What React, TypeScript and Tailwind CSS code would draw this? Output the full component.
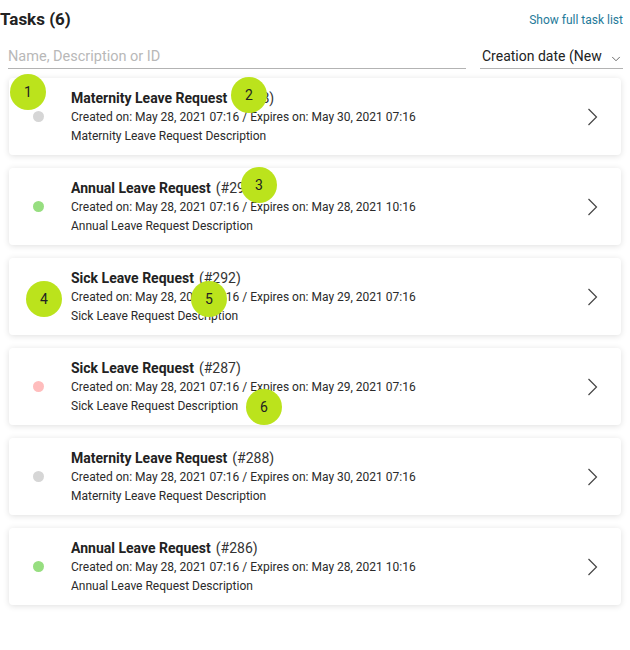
import { ChevronDown } from "lucide-react";

type Task = {
  name: string;
  id: number;
  created: string;
  expires: string;
  status: "grey" | "green" | "red";
};

const tasks: Task[] = [
  { name: "Maternity Leave Request", id: 288, created: "May 28, 2021 07:16", expires: "May 30, 2021 07:16", status: "grey" },
  { name: "Annual Leave Request", id: 290, created: "May 28, 2021 07:16", expires: "May 28, 2021 10:16", status: "green" },
  { name: "Sick Leave Request", id: 292, created: "May 28, 2021 07:16", expires: "May 29, 2021 07:16", status: "grey" },
  { name: "Sick Leave Request", id: 287, created: "May 28, 2021 07:16", expires: "May 29, 2021 07:16", status: "red" },
  { name: "Maternity Leave Request", id: 288, created: "May 28, 2021 07:16", expires: "May 30, 2021 07:16", status: "grey" },
  { name: "Annual Leave Request", id: 286, created: "May 28, 2021 07:16", expires: "May 28, 2021 10:16", status: "green" },
];

const dotColor = {
  grey: "bg-[#d6d6d6]",
  green: "bg-[#97de80]",
  red: "bg-[#ffbdbd]",
};

// callout markers laid over the screenshot
const markers = [
  { n: 1, cls: "left-[10px] top-[74px]" },
  { n: 2, cls: "left-[231px] top-[77px]" },
  { n: 3, cls: "left-[241px] top-[167px]" },
  { n: 4, cls: "left-[26px] top-[281px]" },
  { n: 5, cls: "left-[191px] top-[281px]" },
  { n: 6, cls: "left-[246px] top-[389px]" },
];

function Chevron() {
  return (
    <svg width="11" height="18" viewBox="0 0 11 18" className="mr-[23px]" fill="none">
      <polyline points="1.5,1 9.5,9 1.5,17" stroke="#444" strokeWidth="1.2" />
    </svg>
  );
}

function TaskCard({ task }: { task: Task }) {
  return (
    <div className="flex h-[77px] items-center rounded-[4px] bg-white shadow-[0_1px_6px_rgba(0,0,0,0.13)]">
      <div className="flex w-[62px] justify-center">
        <span className={`ml-[-3px] h-[11px] w-[11px] rounded-full ${dotColor[task.status]}`} />
      </div>
      <div className="flex-1 text-[#222]">
        <div className="text-[14px] leading-[20px]">
          <span className="font-bold">{task.name}</span>
          <span className="ml-[5px] text-[#333]">(#{task.id})</span>
        </div>
        <div className="text-[12px] leading-[19px] text-[#2a2a2a]">
          Created on: {task.created} / Expires on: {task.expires}
        </div>
        <div className="text-[12px] leading-[19px] text-[#2a2a2a]">{task.name} Description</div>
      </div>
      <Chevron />
    </div>
  );
}

export default function App() {
  return (
    <div className="relative min-h-[650px] bg-white font-['Roboto','Liberation_Sans',sans-serif]">
      <div className="flex h-[40px] items-center justify-between pr-[7px]">
        <h1 className="m-0 text-[17px] font-bold text-[#222]">Tasks (6)</h1>
        <a className="text-[12px] text-[#1f7a99]">Show full task list</a>
      </div>

      <div className="mt-[5px] flex items-end gap-[14px] pl-[8px] pr-[7px]">
        <div className="flex h-[24px] flex-1 items-center border-b border-[#b3b3b3]">
          <span className="text-[14.5px] text-[#b8b8b8]">Name, Description or ID</span>
        </div>
        <div className="flex h-[24px] w-[143px] items-center justify-between border-b border-[#b3b3b3]">
          <span className="whitespace-nowrap pl-[2px] text-[14px] text-[#222]">Creation date (New</span>
          <ChevronDown className="mt-[5px] h-[14px] w-[14px] text-[#555]" strokeWidth={1.5} />
        </div>
      </div>

      <div className="mt-[9px] flex flex-col gap-[13px] px-[9px]">
        {tasks.map((t, i) => (
          <TaskCard key={i} task={t} />
        ))}
      </div>

      {markers.map((m) => (
        <div
          key={m.n}
          className={`absolute flex h-[36px] w-[36px] items-center justify-center rounded-full bg-[#bbe31c] text-[14px] text-[#222] ${m.cls}`}
        >
          {m.n}
        </div>
      ))}
    </div>
  );
}
